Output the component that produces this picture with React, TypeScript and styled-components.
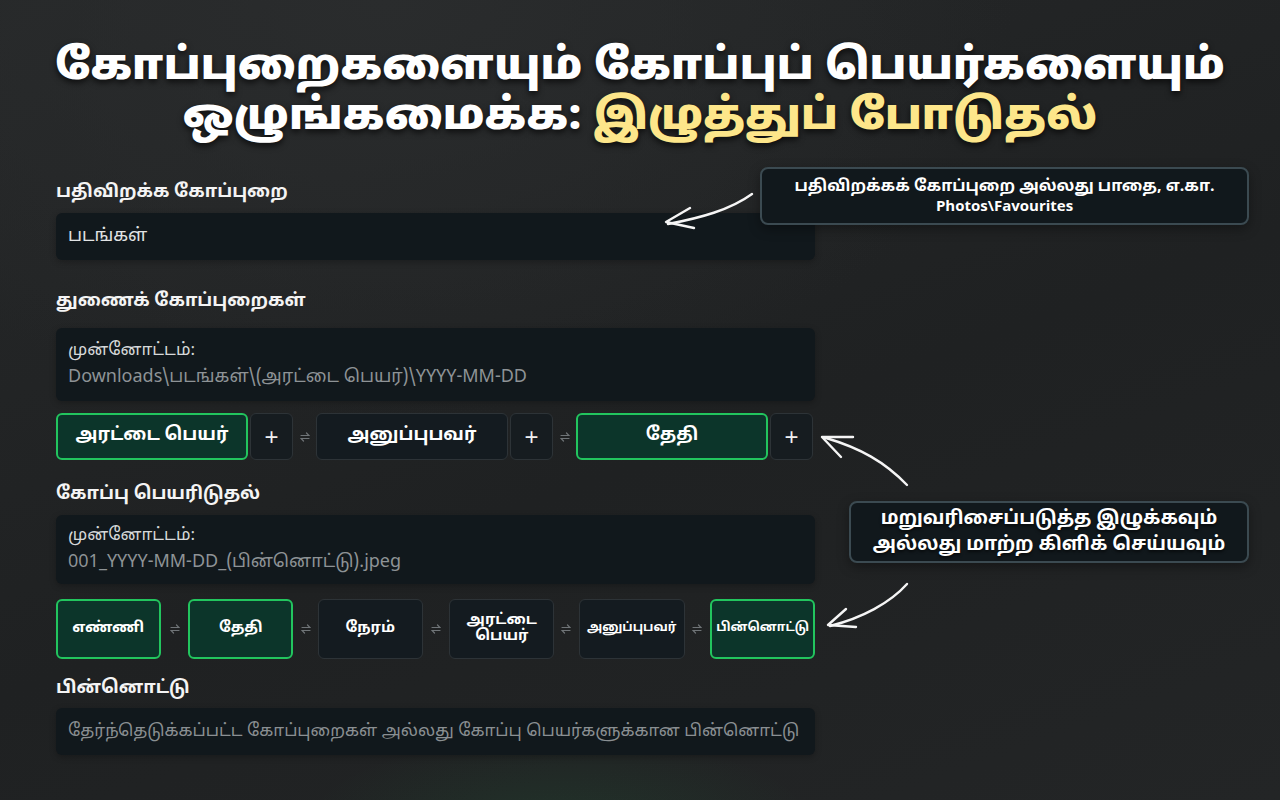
import { Fragment } from 'react';
import styled, { createGlobalStyle } from 'styled-components';

const GlobalStyle = createGlobalStyle`
  html, body {
    margin: 0;
    padding: 0;
    height: 100%;
  }
  body {
    background: #202223;
    font-family: "Noto Sans Tamil", "Lohit Tamil", "Noto Sans", "Liberation Sans", sans-serif;
    color: #f2f2f2;
  }
`;

const Page = styled.div`
  position: relative;
  width: 1280px;
  height: 800px;
  overflow: hidden;
  background:
    radial-gradient(ellipse 360px 120px at 560px 820px, rgba(34, 197, 94, 0.09), transparent 70%),
    radial-gradient(ellipse 900px 600px at 30% 0%, #2a2c2d, transparent 70%),
    linear-gradient(160deg, #262829 0%, #1f2122 55%, #232526 100%);
`;

const Title = styled.h1`
  margin: 0;
  padding-top: 44px;
  text-align: center;
  font-size: 43px;
  line-height: 50px;
  font-weight: 900;
  color: #ffffff;
  letter-spacing: 0.3px;
  text-shadow: 0 3px 6px rgba(0, 0, 0, 0.7);
`;

const Highlight = styled.span`
  color: #fde68a;
`;

const Column = styled.div`
  width: 759px;
  margin-left: 56px;
  margin-top: 38px;
  display: flex;
  flex-direction: column;
`;

const Label = styled.div<{ $gap?: number; $below?: number }>`
  font-size: 18px;
  line-height: 22px;
  font-weight: 700;
  color: #f4f4f4;
  margin-top: ${(p) => p.$gap ?? 0}px;
  margin-bottom: ${(p) => p.$below ?? 9}px;
`;

const Field = styled.div<{ $placeholder?: boolean }>`
  height: 47px;
  box-sizing: border-box;
  padding: 0 12px;
  display: flex;
  align-items: center;
  background: #11181c;
  border-radius: 6px;
  font-size: ${(p) => (p.$placeholder ? 17 : 18)}px;
  color: ${(p) => (p.$placeholder ? '#8a8f92' : '#e2e4e5')};
  box-shadow: 0 2px 6px rgba(0, 0, 0, 0.25);
`;

const Preview = styled.div<{ $h: number }>`
  height: ${(p) => p.$h}px;
  box-sizing: border-box;
  padding: 0 12px;
  display: flex;
  flex-direction: column;
  justify-content: center;
  gap: 6px;
  background: #11181c;
  border-radius: 6px;
  box-shadow: 0 2px 6px rgba(0, 0, 0, 0.25);
`;

const PreviewHead = styled.div`
  font-size: 17px;
  line-height: 21px;
  color: #d6d8d9;
`;

const PreviewPath = styled.div`
  font-size: 18px;
  line-height: 22px;
  color: #8e9396;
`;

const ChipRow = styled.div<{ $h: number; $gap: number }>`
  display: flex;
  align-items: center;
  height: ${(p) => p.$h}px;
  margin-top: ${(p) => p.$gap}px;
`;

const Chip = styled.div<{ $active?: boolean; $w: number; $size?: number }>`
  width: ${(p) => p.$w}px;
  height: 100%;
  box-sizing: border-box;
  display: flex;
  align-items: center;
  justify-content: center;
  text-align: center;
  white-space: pre-line;
  border-radius: 6px;
  font-weight: 700;
  font-size: ${(p) => p.$size ?? 18}px;
  line-height: 1.05;
  color: #ffffff;
  background: ${(p) => (p.$active ? '#0c352a' : '#141b20')};
  border: ${(p) => (p.$active ? '2px solid #22c55e' : '1px solid #2d3337')};
`;

const PlusButton = styled.div`
  width: 43px;
  height: 100%;
  margin-left: 2px;
  box-sizing: border-box;
  display: flex;
  align-items: center;
  justify-content: center;
  border-radius: 6px;
  background: #161c20;
  border: 1px solid #2d3337;
  font-family: "Liberation Sans", sans-serif;
  font-size: 24px;
  color: #f0f0f0;
`;

const SwapSlot = styled.div<{ $w: number }>`
  width: ${(p) => p.$w}px;
  display: flex;
  align-items: center;
  justify-content: center;
  color: #6f7477;
`;

const Callout = styled.div<{ $x: number; $y: number; $w: number; $h: number; $size: number }>`
  position: absolute;
  left: ${(p) => p.$x}px;
  top: ${(p) => p.$y}px;
  width: ${(p) => p.$w}px;
  height: ${(p) => p.$h}px;
  box-sizing: border-box;
  display: flex;
  flex-direction: column;
  align-items: center;
  justify-content: center;
  text-align: center;
  background: #11181c;
  border: 2px solid #3b4a51;
  border-radius: 8px;
  font-weight: 700;
  font-size: ${(p) => p.$size}px;
  line-height: 1.2;
  color: #ffffff;
  box-shadow: 0 4px 12px rgba(0, 0, 0, 0.35);
`;

const CalloutLatin = styled.span`
  font-family: "Open Sans", "Noto Sans", sans-serif;
  font-size: 15px;
  line-height: 1.1;
`;

const BigCalloutText = styled.div`
  line-height: 26px;
  text-shadow: 0 2px 3px rgba(0, 0, 0, 0.6);
`;

const ArrowLayer = styled.svg`
  position: absolute;
  left: 0;
  top: 0;
  pointer-events: none;
`;

function SwapIcon() {
  return (
    <svg width="10" height="12" viewBox="0 0 10 12" fill="none" stroke="currentColor" strokeWidth="1.2" strokeLinecap="round">
      <path d="M1 4.5h8L6.5 2" />
      <path d="M9 7.5H1l2.5 2.5" />
    </svg>
  );
}

const subChips = [
  { label: 'அரட்டை பெயர்', active: true },
  { label: 'அனுப்புபவர்', active: false },
  { label: 'தேதி', active: true },
];

const nameChips = [
  { label: 'எண்ணி', active: true, w: 105, size: 15 },
  { label: 'தேதி', active: true, w: 105, size: 15 },
  { label: 'நேரம்', active: false, w: 105, size: 15 },
  { label: 'அரட்டை\nபெயர்', active: false, w: 105, size: 15 },
  { label: 'அனுப்புபவர்', active: false, w: 106, size: 12.5 },
  { label: 'பின்னொட்டு', active: true, w: 105, size: 12.5 },
];

const nameGaps = [28, 25, 27, 25, 26];

export default function App() {
  return (
    <>
      <GlobalStyle />
      <Page>
        <Title>
          கோப்புறைகளையும் கோப்புப் பெயர்களையும்
          <br />
          ஒழுங்கமைக்க: <Highlight>இழுத்துப் போடுதல்</Highlight>
        </Title>

        <Column>
          <Label>பதிவிறக்க கோப்புறை</Label>
          <Field>படங்கள்</Field>

          <Label $gap={31} $below={15}>துணைக் கோப்புறைகள்</Label>
          <Preview $h={73}>
            <PreviewHead>முன்னோட்டம்:</PreviewHead>
            <PreviewPath>Downloads\படங்கள்\(அரட்டை பெயர்)\YYYY-MM-DD</PreviewPath>
          </Preview>

          <ChipRow $h={47} $gap={12}>
            {subChips.map((c, i) => (
              <Fragment key={c.label}>
                {i > 0 && (
                  <SwapSlot $w={23}>
                    <SwapIcon />
                  </SwapSlot>
                )}
                <Chip $active={c.active} $w={192}>
                  {c.label}
                </Chip>
                <PlusButton>+</PlusButton>
              </Fragment>
            ))}
          </ChipRow>

          <Label $gap={24}>கோப்பு பெயரிடுதல்</Label>
          <Preview $h={69}>
            <PreviewHead>முன்னோட்டம்:</PreviewHead>
            <PreviewPath>001_YYYY-MM-DD_(பின்னொட்டு).jpeg</PreviewPath>
          </Preview>

          <ChipRow $h={60} $gap={15}>
            {nameChips.map((c, i) => (
              <Fragment key={c.label}>
                {i > 0 && (
                  <SwapSlot $w={nameGaps[i - 1]}>
                    <SwapIcon />
                  </SwapSlot>
                )}
                <Chip $active={c.active} $w={c.w} $size={c.size}>
                  {c.label}
                </Chip>
              </Fragment>
            ))}
          </ChipRow>

          <Label $gap={19} $below={8}>பின்னொட்டு</Label>
          <Field $placeholder>தேர்ந்தெடுக்கப்பட்ட கோப்புறைகள் அல்லது கோப்பு பெயர்களுக்கான பின்னொட்டு</Field>
        </Column>

        <Callout $x={760} $y={167} $w={489} $h={58} $size={16}>
          <div>பதிவிறக்கக் கோப்புறை அல்லது பாதை, எ.கா.</div>
          <CalloutLatin>Photos\Favourites</CalloutLatin>
        </Callout>

        <Callout $x={849} $y={501} $w={400} $h={62} $size={19}>
          <BigCalloutText>மறுவரிசைப்படுத்த இழுக்கவும்</BigCalloutText>
          <BigCalloutText>அல்லது மாற்ற கிளிக் செய்யவும்</BigCalloutText>
        </Callout>

        <ArrowLayer width="1280" height="800" viewBox="0 0 1280 800" fill="none" stroke="#f5f5f5" strokeWidth="2.4" strokeLinecap="round" strokeLinejoin="round">
          <path d="M752 194 C730 210 700 218 668 224" />
          <path d="M690 208 L666 222 L694 228" />
          <path d="M907 485 C885 462 860 448 826 438" />
          <path d="M853 437 L822 437 L841 457" />
          <path d="M907 584 C890 603 862 618 830 626" />
          <path d="M846 609 L828 625 L856 627" />
        </ArrowLayer>
      </Page>
    </>
  );
}
